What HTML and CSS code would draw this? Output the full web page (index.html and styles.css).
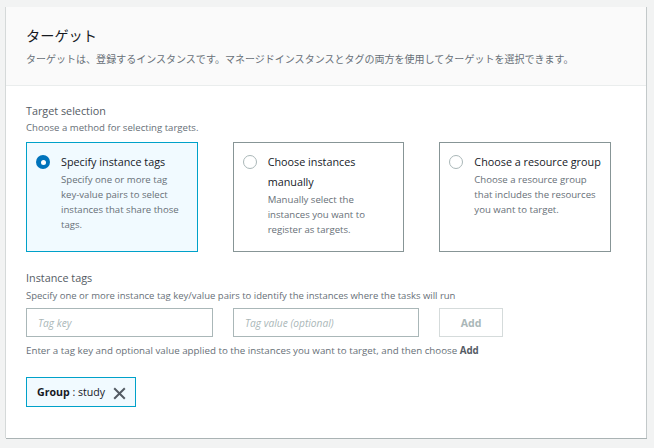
FILE: index.html
```html
<!DOCTYPE html>
<html lang="ja">
<head>
<meta charset="utf-8">
<title>ターゲット</title>
<link rel="stylesheet" href="styles.css">
</head>
<body>
<section class="panel">
  <header class="panel-header">
    <h2 class="panel-title">ターゲット</h2>
    <p class="panel-desc">ターゲットは、登録するインスタンスです。マネージドインスタンスとタグの両方を使用してターゲットを選択できます。</p>
  </header>
  <div class="panel-body">
    <div class="field-label">Target selection</div>
    <div class="field-desc">Choose a method for selecting targets.</div>
    <div class="tiles">
      <div class="tile selected">
        <span class="radio checked"></span>
        <div class="tile-text">
          <div class="tile-label">Specify instance tags</div>
          <div class="tile-desc">Specify one or more tag key-value pairs to select instances that share those tags.</div>
        </div>
      </div>
      <div class="tile">
        <span class="radio"></span>
        <div class="tile-text">
          <div class="tile-label">Choose instances manually</div>
          <div class="tile-desc">Manually select the instances you want to register as targets.</div>
        </div>
      </div>
      <div class="tile">
        <span class="radio"></span>
        <div class="tile-text">
          <div class="tile-label">Choose a resource group</div>
          <div class="tile-desc">Choose a resource group that includes the resources you want to target.</div>
        </div>
      </div>
    </div>

    <div class="field-label field-gap">Instance tags</div>
    <div class="field-desc field-desc-2">Specify one or more instance tag key/value pairs to identify the instances where the tasks will run</div>
    <div class="tag-row">
      <input class="text-input" type="text" placeholder="Tag key">
      <input class="text-input" type="text" placeholder="Tag value (optional)">
      <button class="add-btn" type="button" disabled>Add</button>
    </div>
    <div class="helper">Enter a tag key and optional value applied to the instances you want to target, and then choose <b>Add</b></div>

    <div class="token">
      <span class="token-text"><b>Group</b> : study</span>
      <svg class="token-x" width="13" height="13" viewBox="0 0 13 13" aria-hidden="true">
        <path d="M1.2 1.2 L11.8 11.8 M11.8 1.2 L1.2 11.8" stroke="#545b64" stroke-width="2" fill="none"/>
      </svg>
    </div>
  </div>
</section>
</body>
</html>
```

FILE: styles.css
```css
* {
  box-sizing: border-box;
}

html, body {
  margin: 0;
  padding: 0;
}

body {
  background: #f2f3f3;
  font-family: "Open Sans", "Noto Sans CJK JP", sans-serif;
  color: #16191f;
  padding: 7px 0 0 6px;
  width: 654px;
  height: 448px;
  overflow: hidden;
}

.panel {
  width: 640px;
  background: #ffffff;
  box-shadow: -1px 0 0 #d5d9d9, 1px 0 0 #c3c9ca, 0 1px 0 #aab3b4, 1px 1px 0 #aab3b4;
}

.panel-header {
  background: #fafafa;
  border-bottom: 1px solid #eaeded;
  padding: 18px 20px 18px 20px;
}

.panel-title {
  margin: 0;
  font-family: "Noto Sans CJK JP", sans-serif;
  font-size: 14.2px;
  font-weight: 400;
  line-height: 20px;
  color: #16191f;
}

.panel-desc {
  margin: 6px 0 0 0;
  font-family: "Noto Sans CJK JP", sans-serif;
  font-size: 10.03px;
  line-height: 16px;
  color: #687078;
  white-space: nowrap;
}

.panel-body {
  padding: 17px 20px 31px 20px;
}

.field-label {
  font-size: 10.8px;
  line-height: 16px;
  color: #545b64;
}

.field-gap {
  margin-top: 18px;
}

.field-desc {
  margin-top: 1px;
  font-size: 9.6px;
  line-height: 16px;
  color: #687078;
}

.field-desc-2 {
  margin-top: 2px;
  font-size: 9.5px;
}

.tiles {
  margin-top: 6px;
  width: 585px;
  display: grid;
  grid-template-columns: 1fr 1fr 1fr;
  column-gap: 35px;
}

.tile {
  height: 110px;
  border: 1px solid #879596;
  padding: 9px 3px 0 9px;
  display: flex;
  align-items: flex-start;
  gap: 11px;
  background: #ffffff;
}

.tile.selected {
  border-color: #00a1c9;
  background: #f1faff;
}

.radio {
  flex: 0 0 14px;
  width: 14px;
  height: 14px;
  margin-top: 3px;
  border-radius: 50%;
  border: 1px solid #aab7b8;
  background: #ffffff;
  position: relative;
}

.radio.checked {
  border: none;
  background: #0073bb;
}

.radio.checked::after {
  content: "";
  position: absolute;
  left: 4.5px;
  top: 4.5px;
  width: 5px;
  height: 5px;
  border-radius: 50%;
  background: #ffffff;
}

.tile-text {
  min-width: 0;
}

.tile-label {
  font-size: 10.8px;
  line-height: 20px;
  color: #16191f;
}

.tile-desc {
  font-size: 9.6px;
  line-height: 15px;
  color: #687078;
  padding-right: 6px;
}

.tag-row {
  margin-top: 4px;
  display: flex;
  gap: 20px;
}

.text-input {
  width: 187px;
  height: 29px;
  margin: 0;
  border: 1px solid #aab7b8;
  border-radius: 0;
  padding: 0 0 0 11px;
  font-family: "Open Sans", sans-serif;
  font-size: 10.2px;
  background: #ffffff;
  color: #16191f;
  outline: none;
}

.text-input:nth-child(2) {
  width: 186px;
}

.text-input::placeholder {
  color: #aab7b8;
  font-style: italic;
}

.add-btn {
  width: 64px;
  height: 29px;
  margin: 0;
  padding: 0;
  border: 1px solid #d5dbdb;
  border-radius: 0;
  background: #ffffff;
  font-family: "Open Sans", sans-serif;
  font-size: 10.6px;
  font-weight: 700;
  color: #aab7b8;
}

.helper {
  margin-top: 6px;
  font-size: 9.75px;
  line-height: 16px;
  color: #687078;
}

.helper b {
  color: #545b64;
  font-weight: 700;
}

.token {
  margin-top: 18px;
  width: 110px;
  height: 30px;
  border: 1px solid #00a1c9;
  background: #f1faff;
  display: flex;
  align-items: center;
  padding: 0 0 0 10px;
  gap: 8px;
}

.token-text {
  font-size: 10.6px;
  line-height: 16px;
  color: #16191f;
  white-space: nowrap;
}

.token-text b {
  font-weight: 700;
}

.token-x {
  display: block;
  flex: 0 0 13px;
  margin-top: 2px;
}
```
